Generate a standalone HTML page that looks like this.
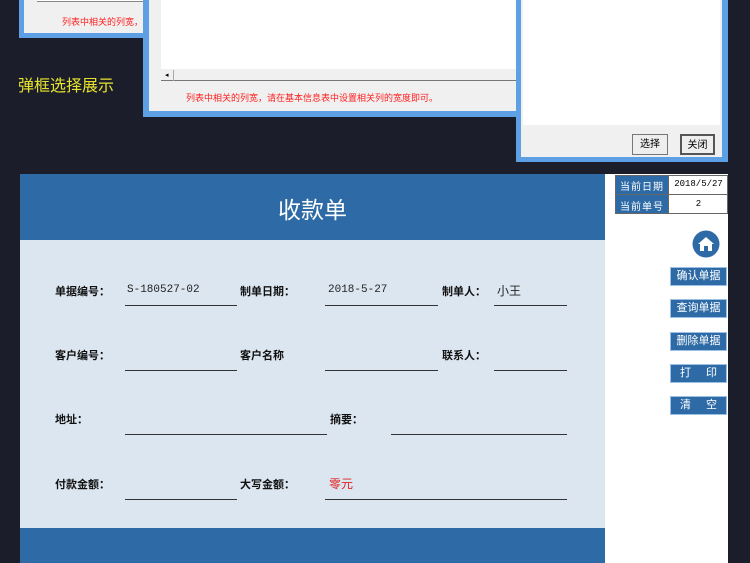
<!DOCTYPE html>
<html><head><meta charset="utf-8"><style>
*{margin:0;padding:0;box-sizing:border-box}
body{width:750px;height:563px;background:#1b1e2a;position:relative;overflow:hidden;font-family:"Liberation Sans","Noto Sans CJK SC",sans-serif}
.a{position:absolute}
.red{color:#ff2020;font-size:9px}
.lbl{position:absolute;font-size:11px;font-weight:bold;color:#111}
.val{position:absolute;font-size:11px;color:#222;font-family:"Liberation Mono","Noto Sans CJK SC",monospace}
.ln{position:absolute;height:1px;background:#333}
.btn{position:absolute;left:670px;width:57px;height:19px;background:#2e6ba6;border:1px solid #9cc0e4;color:#fff;font-size:11px;line-height:17px;text-align:center}
.wb{position:absolute;height:21px;background:#eee;border:1px solid #777;font-size:10px;text-align:center;line-height:19px;color:#000}
</style></head><body>
<div class="a" style="left:19px;top:0;width:124px;height:38px;background:#5ea0e6"></div>
<div class="a" style="left:24px;top:0;width:119px;height:33px;background:#f0f0f0"></div>
<div class="a" style="left:37px;top:0;width:106px;height:2px;background:#fff;border-bottom:1px solid #888"></div>
<div class="a red" style="left:62px;top:15px;white-space:nowrap;width:81px;overflow:hidden">列表中相关的列宽，请在</div>
<div class="a" style="left:143px;top:0;width:375px;height:117px;background:#5ea0e6"></div>
<div class="a" style="left:149px;top:0;width:368px;height:111px;background:#f0f0f0"></div>
<div class="a" style="left:161px;top:0;width:356px;height:81px;background:#fff;border-bottom:1px solid #777"></div>
<div class="a" style="left:161px;top:69px;width:356px;height:12px;background:#f0f0f0;border-bottom:1px solid #777"></div>
<div class="a" style="left:165px;top:71px;font-size:7px;color:#000">◂</div>
<div class="a" style="left:173px;top:70px;width:1px;height:11px;background:#aaa"></div>
<div class="a red" style="left:186px;top:91px;white-space:nowrap">列表中相关的列宽，请在基本信息表中设置相关列的宽度即可。</div>
<div class="a" style="left:516px;top:0;width:212px;height:162px;background:#5ea0e6"></div>
<div class="a" style="left:521px;top:0;width:201px;height:157px;background:#f0f0f0"></div>
<div class="a" style="left:523px;top:0;width:197px;height:125px;background:#fff"></div>
<div class="wb" style="left:632px;top:134px;width:36px">选择</div>
<div class="wb" style="left:680px;top:134px;width:35px;border:2px solid #555">关闭</div>
<div class="a" style="left:18px;top:72px;font-size:16px;color:#e6e22e">弹框选择展示</div>
<div class="a" style="left:20px;top:174px;width:585px;height:389px;background:#dce6f0"></div>
<div class="a" style="left:20px;top:174px;width:585px;height:66px;background:#2e6ba6"></div>
<div class="a" style="left:20px;top:191px;width:585px;text-align:center;font-size:23px;color:#fff">收款单</div>
<div class="a" style="left:20px;top:528px;width:585px;height:35px;background:#2e6ba6"></div>
<div class="a" style="left:605px;top:174px;width:123px;height:389px;background:#fff"></div>
<div class="a" style="left:615px;top:175px;width:53px;height:39px;background:#2e6ba6"></div>
<div class="a" style="left:615px;top:175px;width:113px;height:39px;border:1px solid #666"></div>
<div class="a" style="left:615px;top:194px;width:113px;height:1px;background:#666"></div>
<div class="a" style="left:668px;top:175px;width:1px;height:39px;background:#666"></div>
<div class="a" style="left:620px;top:178px;font-size:10px;color:#fff;letter-spacing:1px">当前日期</div>
<div class="a" style="left:620px;top:198px;font-size:10px;color:#fff;letter-spacing:1px">当前单号</div>
<div class="a" style="left:669px;top:179px;width:59px;text-align:center;font-size:9px;font-family:'Liberation Mono',monospace">2018/5/27</div>
<div class="a" style="left:669px;top:199px;width:59px;text-align:center;font-size:9px;font-family:'Liberation Mono',monospace">2</div>
<svg class="a" style="left:692px;top:230px" width="28" height="28" viewBox="0 0 28 28"><circle cx="14" cy="14" r="13.5" fill="#2e6ba6"/><path d="M6 14 L14 7 L22 14 L20 14 L20 21 L16 21 L16 16 L12 16 L12 21 L8 21 L8 14Z" fill="#fff"/></svg>
<div class="btn" style="top:267px">确认单据</div>
<div class="btn" style="top:299px">查询单据</div>
<div class="btn" style="top:332px">删除单据</div>
<div class="btn" style="top:364px;text-align:left;padding:0 9px">打<span style="float:right">印</span></div>
<div class="btn" style="top:396px;text-align:left;padding:0 9px">清<span style="float:right">空</span></div>
<div class="lbl" style="left:55px;top:283px">单据编号：</div>
<div class="val" style="left:127px;top:284px">S-180527-02</div>
<div class="ln" style="left:125px;top:305px;width:112px"></div>
<div class="lbl" style="left:240px;top:283px">制单日期：</div>
<div class="val" style="left:328px;top:284px">2018-5-27</div>
<div class="ln" style="left:325px;top:305px;width:113px"></div>
<div class="lbl" style="left:442px;top:283px">制单人：</div>
<div class="a" style="left:497px;top:282px;font-size:12px;color:#222">小王</div>
<div class="ln" style="left:494px;top:305px;width:73px"></div>
<div class="lbl" style="left:55px;top:347px">客户编号：</div>
<div class="ln" style="left:125px;top:370px;width:112px"></div>
<div class="lbl" style="left:240px;top:347px">客户名称</div>
<div class="ln" style="left:325px;top:370px;width:113px"></div>
<div class="lbl" style="left:442px;top:347px">联系人：</div>
<div class="ln" style="left:494px;top:370px;width:73px"></div>
<div class="lbl" style="left:55px;top:411px">地址：</div>
<div class="ln" style="left:125px;top:434px;width:202px"></div>
<div class="lbl" style="left:330px;top:411px">摘要：</div>
<div class="ln" style="left:391px;top:434px;width:176px"></div>
<div class="lbl" style="left:55px;top:476px">付款金额：</div>
<div class="ln" style="left:125px;top:499px;width:112px"></div>
<div class="lbl" style="left:240px;top:476px">大写金额：</div>
<div class="a" style="left:329px;top:475px;font-size:12px;color:#e02020">零元</div>
<div class="ln" style="left:325px;top:499px;width:242px"></div>
</body></html>
